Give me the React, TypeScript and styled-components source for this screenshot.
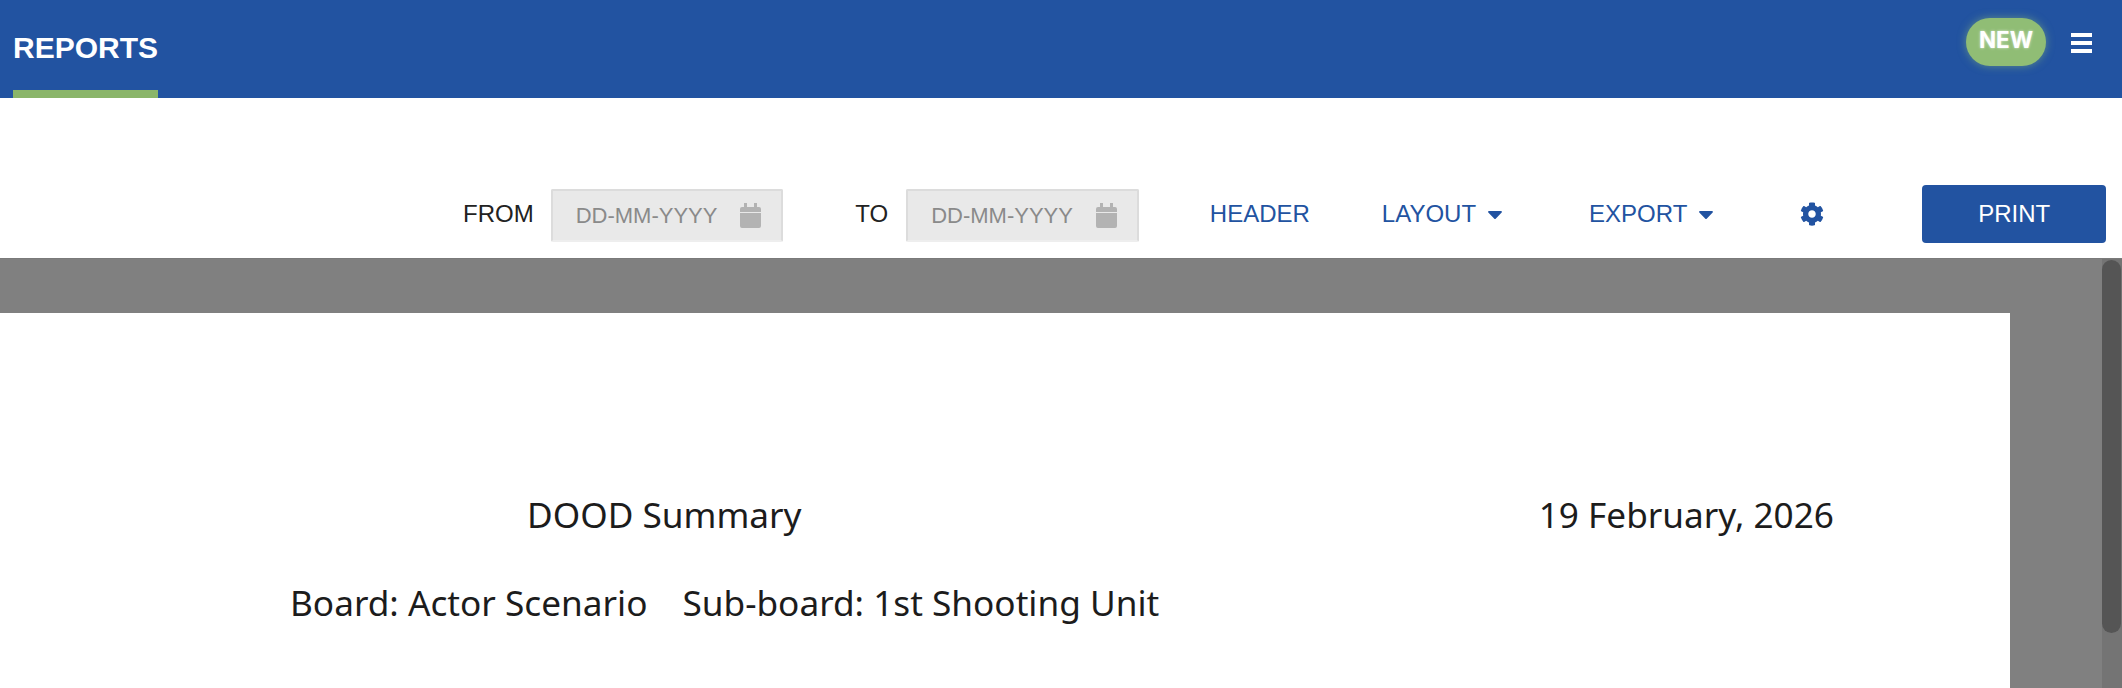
import React from "react";
import styled, { createGlobalStyle } from "styled-components";
import { FaCog, FaCaretDown } from "react-icons/fa";

const Global = createGlobalStyle`
  html, body { margin: 0; padding: 0; height: 100%; overflow: hidden; background: #fff; }
  #root { height: 100%; }
`;

const Shell = styled.div`
  display: flex;
  flex-direction: column;
  height: 688px;
  font-family: "Liberation Sans", Arial, sans-serif;
`;

const Header = styled.header`
  flex: 0 0 98px;
  display: flex;
  align-items: stretch;
  justify-content: space-between;
  padding: 0 30px 0 13px;
  background: #2253a1;
  color: #fff;
`;

const Tab = styled.div`
  display: flex;
  align-items: center;
  padding-top: 6px;
  box-sizing: border-box;
  width: 145px;
  border-bottom: 8px solid #8ab56a;
  font-size: 30px;
  font-weight: 700;
`;

const HeaderActions = styled.div`
  display: flex;
  align-items: flex-start;
  gap: 25px;
  padding-top: 18px;
`;

const NewBadge = styled.span`
  display: flex;
  align-items: center;
  justify-content: center;
  width: 80px;
  height: 48px;
  border-radius: 24px;
  background: #90bd75;
  box-shadow: 0 0 8px rgba(144, 189, 117, 0.55);
  color: #fff;
  font-family: Inter, "Liberation Sans", sans-serif;
  font-size: 22.5px;
  font-weight: 700;
  text-shadow: 0 0 3px rgba(255, 255, 255, 0.7);
  padding-bottom: 5px;
  box-sizing: border-box;
`;

const MenuIcon = styled.svg`
  display: block;
  margin-top: 15px;
  width: 21px;
  height: 20px;
  fill: #fff;
`;

const Toolbar = styled.div`
  flex: 0 0 160px;
  display: flex;
  align-items: flex-start;
  padding: 91px 16px 0 463px;
  box-sizing: border-box;
  font-size: 24px;
  color: #222;
`;

const FieldLabel = styled.span<{ $gap: number }>`
  margin: 11px ${(p) => p.$gap}px 0 0;
  line-height: 28px;
`;

const DateField = styled.div<{ $after: number }>`
  display: flex;
  align-items: center;
  justify-content: space-between;
  box-sizing: border-box;
  width: 233px;
  height: 53px;
  margin-right: ${(p) => p.$after}px;
  padding: 0 20px 0 23px;
  background: #e9e9e9;
  border: 2px solid #dcdcdc;
  border-bottom-color: #eeeeee;
  border-radius: 2px;
  color: #8a8a8a;
  font-size: 22px;
`;

const CalendarIcon = styled.svg`
  flex: none;
  width: 21px;
  height: 25px;
  fill: #b3b3b3;
`;

const ToolLink = styled.span<{ $after: number }>`
  display: flex;
  align-items: center;
  gap: 9px;
  margin: 11px ${(p) => p.$after}px 0 0;
  line-height: 28px;
  color: #2253a1;
  font-size: 24px;
`;

const Caret = styled(FaCaretDown)`
  font-size: 24px;
  margin: 0 -2px;
`;

const Gear = styled(FaCog)`
  flex: none;
  margin: 13px 98px 0 0;
  color: #2253a1;
  font-size: 24px;
`;

const PrintButton = styled.button`
  width: 184px;
  height: 58px;
  margin-top: -4px;
  border: 0;
  border-radius: 4px;
  background: #2253a1;
  color: #fff;
  font-family: inherit;
  font-size: 24px;
`;

const Viewer = styled.main`
  position: relative;
  flex: 1;
  min-height: 0;
  background: #808080;
  overflow: hidden;
  border-top: 1px solid #7a7a7a;
`;

const ScrollTrack = styled.div`
  position: absolute;
  top: 0;
  right: 0;
  bottom: 0;
  width: 20px;
  background: #747474;
`;

const ScrollThumb = styled.div`
  width: 19px;
  height: 373px;
  margin-top: 1px;
  border-radius: 10px;
  background: #555;
`;

const Sheet = styled.article`
  width: 2010px;
  height: 442px;
  margin-top: 54px;
  box-sizing: border-box;
  padding-top: 178px;
  background: #fff;
  color: #1c1c1c;
  font-family: "Noto Sans", "Open Sans", sans-serif;
  font-size: 35.2px;
`;

const TitleRow = styled.div`
  display: flex;
  justify-content: space-between;
  padding: 0 176px 0 527px;
  line-height: 46px;
`;

const BoardRow = styled.div`
  display: flex;
  gap: 35px;
  margin-top: 42px;
  padding-left: 290px;
  line-height: 46px;
`;

const Calendar = () => (
  <CalendarIcon viewBox="0 0 21 25">
    <path d="M4 0h3v4h7V0h3v4h2a2 2 0 0 1 2 2v3H0V6a2 2 0 0 1 2-2h2zM0 10h21v13a2 2 0 0 1-2 2H2a2 2 0 0 1-2-2z" />
  </CalendarIcon>
);

export default function App() {
  return (
    <>
      <Global />
      <Shell>
        <Header>
          <Tab>REPORTS</Tab>
          <HeaderActions>
            <NewBadge>NEW</NewBadge>
            <MenuIcon viewBox="0 0 21 20">
              <rect width="21" height="4" y="0" />
              <rect width="21" height="4" y="8" />
              <rect width="21" height="4" y="16" />
            </MenuIcon>
          </HeaderActions>
        </Header>
        <Toolbar>
          <FieldLabel $gap={17}>FROM</FieldLabel>
          <DateField $after={72}>DD-MM-YYYY<Calendar /></DateField>
          <FieldLabel $gap={18}>TO</FieldLabel>
          <DateField $after={71}>DD-MM-YYYY<Calendar /></DateField>
          <ToolLink $after={72}>HEADER</ToolLink>
          <ToolLink $after={84}>LAYOUT<Caret /></ToolLink>
          <ToolLink $after={84}>EXPORT<Caret /></ToolLink>
          <Gear />
          <PrintButton>PRINT</PrintButton>
        </Toolbar>
        <Viewer>
          <Sheet>
            <TitleRow>
              <span>DOOD Summary</span>
              <span>19 February, 2026</span>
            </TitleRow>
            <BoardRow>
              <span>Board: Actor Scenario</span>
              <span>Sub-board: 1st Shooting Unit</span>
            </BoardRow>
          </Sheet>
          <ScrollTrack><ScrollThumb /></ScrollTrack>
        </Viewer>
      </Shell>
    </>
  );
}
